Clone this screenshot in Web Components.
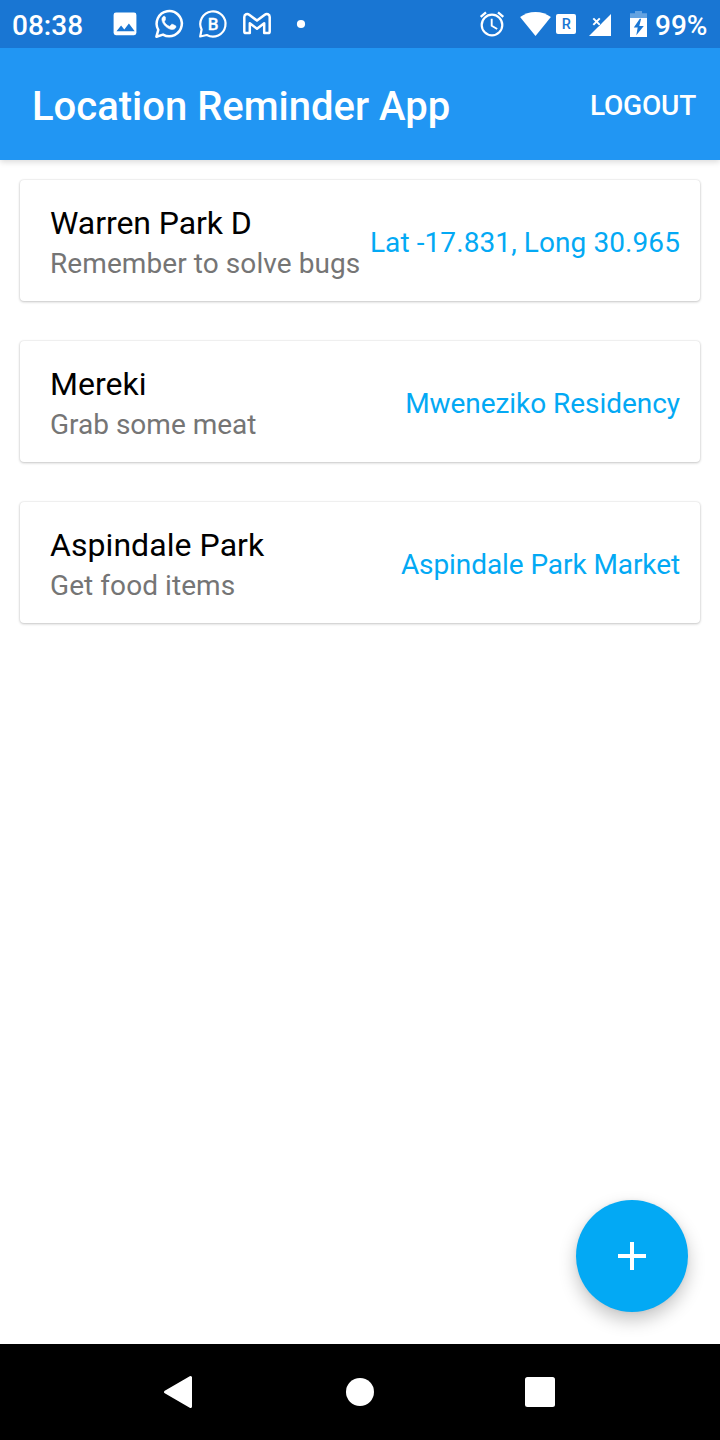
<!DOCTYPE html>
<html lang="en">
<head>
<meta charset="utf-8">
<title>Location Reminder App</title>
<style>
html, body { margin: 0; height: 100%; background: #fff; }
body { font-family: Roboto, "Noto Sans", sans-serif; }
</style>
</head>
<body>
<reminder-app></reminder-app>
<script>
const define = (name, html) => customElements.define(name, class extends HTMLElement {
  constructor() {
    super();
    const t = document.createElement('template');
    t.innerHTML = html;
    this.attachShadow({ mode: 'open' }).appendChild(t.content.cloneNode(true));
  }
});

const icons = {
  image: [44, `<rect x="10.6" y="12.6" width="22.8" height="22.6" rx="2.4" fill="#fff"/><path d="M13.5 31.3l4.6-5.7 3.2 3.8 4.6-5.9 5.8 7.8z" fill="#1976d3"/>`],
  whatsapp: [44, `<path d="M9.4 36.7l1.9-6.800A12.600 12.600 0 1 1 16 34.600z" fill="none" stroke="#fff" stroke-width="2.500" stroke-linejoin="round"/><path d="M18.4 17.100c-.5-.9-1-.9-1.600-.8-1.200.5-2 1.800-1.900 3.300.3 4.700 6.100 9.900 10.300 9.900 1.900 0 3.500-1.100 3.700-2.500.1-.9 0-1-.7-1.400l-2.700-1.300c-.6-.3-.9-.1-1.300.4l-1 1.300c-.4.4-.8.4-1.300.1-2-.9-3.500-2.400-4.400-4-.3-.5-.1-.8.2-1.200.5-.6 1-1.100.7-1.800z" fill="#fff" stroke="#fff" stroke-width=".6"/>`],
  business: [44, `<path d="M9.200 36.500l1.400-7A12.600 12.600 0 1 1 15.800 35z" fill="none" stroke="#fff" stroke-width="2.200" stroke-linejoin="round"/><text x="22" y="30" text-anchor="middle" font-size="17" font-weight="500" fill="#fff" stroke="#fff" stroke-width=".3">B</text>`],
  mail: [44, `<path d="M9.300 17v14.500q0 1.600 1.600 1.600h3.900V23.300l7.200 5.500 7.200-5.500v9.800h3.900q1.600 0 1.600-1.600V17c0-2.800-3-3.800-4.900-2.300L22 20.600l-7.800-5.900C12.300 13.200 9.300 14.200 9.300 17z" fill="none" stroke="#fff" stroke-width="2.500" stroke-linejoin="round"/>`],
  dot: [44, `<circle cx="22" cy="24" r="4.100" fill="#fff"/>`],
  alarm: [30, `<circle cx="15" cy="25" r="10.300" fill="none" stroke="#fff" stroke-width="2.200"/><path d="M14.700 18.700v7l5.500 3.300" fill="none" stroke="#fff" stroke-width="1.900"/><path d="M3.700 16.800l5.300-4.400M21 12.400l5.300 4.400" stroke="#fff" stroke-width="2.400"/>`],
  wifi: [32, `<path d="M.1 17C4.500 13.700 9.500 11.900 15.500 11.900S26.500 13.700 30.900 17L15.500 36z" fill="#fff"/>`],
  roaming: [20, `<rect y="14" width="20" height="20" rx="2" fill="#fff"/><text x="10.300" y="29.200" text-anchor="middle" font-size="14.500" font-weight="500" fill="#1976d3">R</text>`],
  signal: [23, `<path d="M0 36L22 14v22z" fill="#fff"/><path d="M4.500 18.500l6.500 6.500M11 18.500L4.500 25" stroke="#1976d3" stroke-width="4"/><path d="M4.300 18.400l6.500 6.500M10.800 18.400l-6.500 6.500" stroke="#fff" stroke-width="2"/>`],
  battery: [17, `<path d="M0 13.300h5V11h7v2.300h5V18H0z" fill="#fff" fill-opacity=".33"/><path d="M0 18h17v19H0z" fill="#fff"/><path d="M9.800 18.800L3.800 27.400h3.900L6.300 35.200l7.500-9.200H9.300l1.800-7.200z" fill="#1976d3"/>`]
};
customElements.define('status-icon', class extends HTMLElement {
  connectedCallback() {
    const [w, art] = icons[this.getAttribute('name')];
    const root = this.shadowRoot || this.attachShadow({ mode: 'open' });
    root.innerHTML = `<style>:host{display:block;flex:none;width:${w}px;height:48px}svg{display:block;font-family:Roboto,sans-serif;letter-spacing:0}</style>
      <svg width="${w}" height="48" viewBox="0 0 ${w} 48">${art}</svg>`;
  }
});

define('status-bar', `<style>
:host { display: flex; position: relative; z-index: 1; height: 48px; background: #1976d3; color: #fff; font-weight: 500; font-size: 28px; line-height: 51px; box-sizing: border-box; padding: 0 12px; white-space: nowrap; }
.time { width: 91px; }
.space { flex: 1; }
.alarm { margin-right: 13px; }
.wifi { margin-right: 4px; }
.roam { margin-right: 13px; }
.signal { margin-right: 18px; }
.level { width: 53px; margin-left: 8px; }
</style>
<div class="time">08:38</div>
<status-icon name="image"></status-icon><status-icon name="whatsapp"></status-icon><status-icon name="business"></status-icon><status-icon name="mail"></status-icon><status-icon name="dot"></status-icon>
<div class="space"></div>
<status-icon class="alarm" name="alarm"></status-icon><status-icon class="wifi" name="wifi"></status-icon><status-icon class="roam" name="roaming"></status-icon><status-icon class="signal" name="signal"></status-icon><status-icon name="battery"></status-icon>
<div class="level">99%</div>`);

define('app-bar', `<style>
:host { display: flex; justify-content: space-between; align-items: center; height: 112px; box-sizing: border-box; padding: 3px 24px 0 32px; background: #2196f3; color: #fff; font-weight: 500; box-shadow: 0 2px 6px rgba(0,0,0,.15); }
.title { font-size: 40px; padding-top: 2px; }
.action { font-size: 28px; letter-spacing: -.2px; }
</style><div class="title"><slot></slot></div><div class="action"><slot name="action"></slot></div>`);

define('reminder-card', `<style>
:host { display: flex; align-items: center; justify-content: space-between; height: 121px; box-sizing: border-box; padding: 0 20px 0 30px; border-radius: 4px; background: #fff; box-shadow: 0 1px 3px rgba(0,0,0,.2), 0 0 2px rgba(0,0,0,.14); white-space: nowrap; }
.name { font-size: 32px; line-height: 43px; color: #000; letter-spacing: var(--name-track, 0); }
.note { font-size: 28px; line-height: 38px; color: #757575; letter-spacing: var(--note-track, 0); }
.place { font-size: 28px; line-height: 38px; color: #03a9f4; padding-top: 4px; letter-spacing: var(--place-track, 0); }
.text { padding-top: 3px; }
</style><div class="text"><div class="name"><slot name="name"></slot></div><div class="note"><slot></slot></div></div><div class="place"><slot name="place"></slot></div>`);

define('add-button', `<style>
:host { display: block; width: 112px; height: 112px; border-radius: 50%; background: #03a9f4; box-shadow: 0 8px 18px rgba(0,0,0,.23), 0 0 4px rgba(0,0,0,.06); }
svg { display: block; }
</style><svg width="112" height="112"><path d="M42 56h28M56 42v28" stroke="#fff" stroke-width="4"/></svg>`);

define('nav-bar', `<style>
:host { display: flex; justify-content: center; height: 96px; background: #000; }
svg { display: block; width: 180px; height: 96px; }
</style>
<svg viewBox="0 0 180 96"><path d="M75.500 48L100.500 33.500v29z" fill="#fff" stroke="#fff" stroke-width="3" stroke-linejoin="round"/></svg>
<svg viewBox="0 0 180 96"><circle cx="90" cy="48" r="14" fill="#fff"/></svg>
<svg viewBox="0 0 180 96"><rect x="75" y="33" width="30" height="30" rx="2.500" fill="#fff"/></svg>`);

define('reminder-app', `<style>
:host { display: flex; flex-direction: column; width: 720px; height: 1440px; background: #fff; position: relative; overflow: hidden; }
main { flex: 1; display: flex; flex-direction: column; gap: 40px; padding: 20px; }
add-button { position: absolute; right: 32px; bottom: 128px; }
nav-bar { position: relative; }
.warren { --name-track: -.07px; --note-track: .08px; --place-track: .09px; }
.mereki { --place-track: -.05px; }
.aspindale { --name-track: .06px; --note-track: .07px; --place-track: -.08px; }
</style>
<status-bar></status-bar>
<app-bar>Location Reminder App<span slot="action">LOGOUT</span></app-bar>
<main>
<reminder-card class="warren"><span slot="name">Warren Park D</span>Remember to solve bugs<span slot="place">Lat -17.831, Long 30.965</span></reminder-card>
<reminder-card class="mereki"><span slot="name">Mereki</span>Grab some meat<span slot="place">Mweneziko Residency</span></reminder-card>
<reminder-card class="aspindale"><span slot="name">Aspindale Park</span>Get food items<span slot="place">Aspindale Park Market</span></reminder-card>
</main>
<add-button></add-button>
<nav-bar></nav-bar>`);
</script>
</body>
</html>
